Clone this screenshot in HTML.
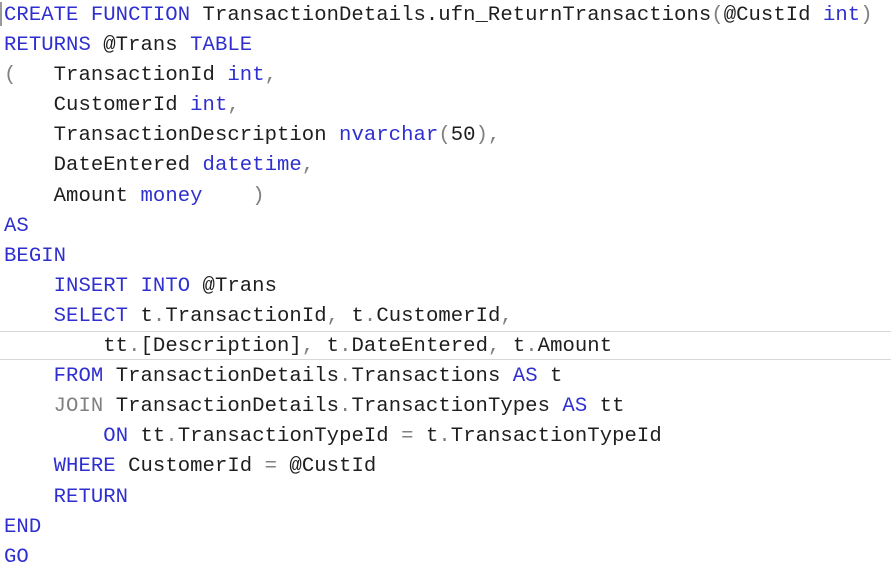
<!DOCTYPE html>
<html><head><meta charset="utf-8"><style>
html,body{margin:0;padding:0;background:#fff;width:891px;height:575px;overflow:hidden}
pre{position:absolute;left:4px;top:1px;margin:0;font-family:"Liberation Mono",monospace;font-size:20.6px;line-height:30.1px;color:#1e1e1e;letter-spacing:0.05px}
.k{color:#2f2fd0}.g{color:#808080}
.hl{position:absolute;left:0;top:331px;width:891px;height:29px;border-top:1px solid #d8d8d8;border-bottom:1px solid #d8d8d8;box-sizing:border-box}
.bar{position:absolute;left:0;top:2px;width:2px;height:24px;background:#999}
</style></head><body>
<div class="hl"></div><div class="bar"></div>
<pre><span class="k">CREATE FUNCTION</span> TransactionDetails.ufn_ReturnTransactions<span class="g">(</span>@CustId <span class="k">int</span><span class="g">)</span>
<span class="k">RETURNS</span> @Trans <span class="k">TABLE</span>
<span class="g">(</span>   TransactionId <span class="k">int</span><span class="g">,</span>
    CustomerId <span class="k">int</span><span class="g">,</span>
    TransactionDescription <span class="k">nvarchar</span><span class="g">(</span>50<span class="g">),</span>
    DateEntered <span class="k">datetime</span><span class="g">,</span>
    Amount <span class="k">money</span>    <span class="g">)</span>
<span class="k">AS</span>
<span class="k">BEGIN</span>
    <span class="k">INSERT INTO</span> @Trans
    <span class="k">SELECT</span> t<span class="g">.</span>TransactionId<span class="g">,</span> t<span class="g">.</span>CustomerId<span class="g">,</span>
        tt<span class="g">.</span>[Description]<span class="g">,</span> t<span class="g">.</span>DateEntered<span class="g">,</span> t<span class="g">.</span>Amount
    <span class="k">FROM</span> TransactionDetails<span class="g">.</span>Transactions <span class="k">AS</span> t
    <span class="g">JOIN</span> TransactionDetails<span class="g">.</span>TransactionTypes <span class="k">AS</span> tt
        <span class="k">ON</span> tt<span class="g">.</span>TransactionTypeId <span class="g">=</span> t<span class="g">.</span>TransactionTypeId
    <span class="k">WHERE</span> CustomerId <span class="g">=</span> @CustId
    <span class="k">RETURN</span>
<span class="k">END</span>
<span class="k">GO</span></pre>
</body></html>
